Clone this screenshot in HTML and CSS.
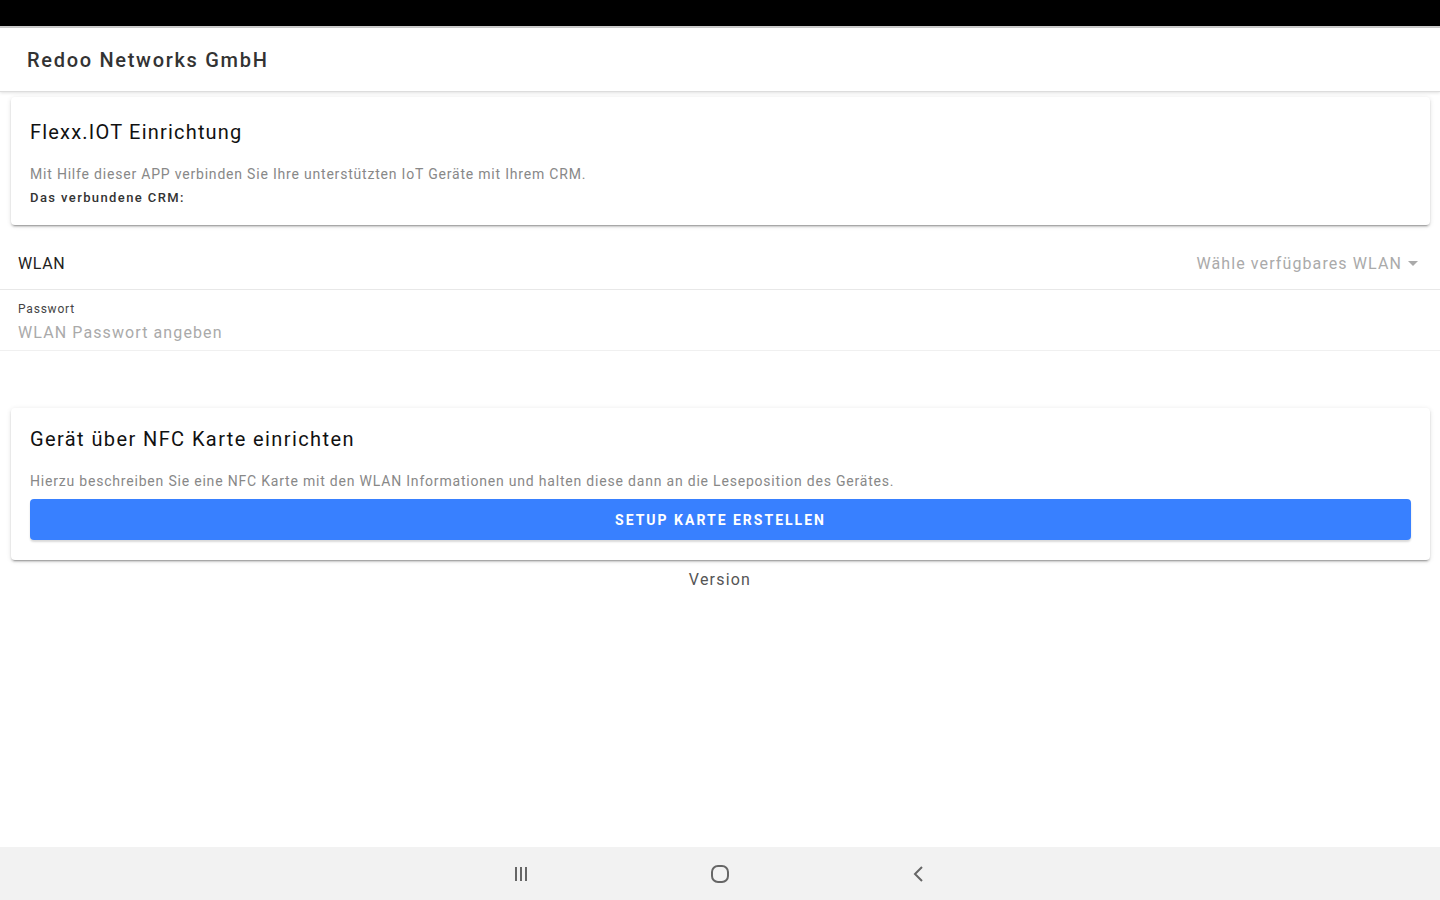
FILE: index.html
```html
<!DOCTYPE html>
<html lang="de">
  <head>
    <meta charset="UTF-8" />
    <meta name="viewport" content="width=device-width, initial-scale=1.0" />
    <title>Flexx.IOT</title>
    <link rel="stylesheet" href="styles.css">
  </head>
  <body>
    <div class="statusBar"></div>

    <div class="app">
      <!-- Toolbar -->
      <header class="toolbar">
        <div class="toolbarTitle">Redoo Networks GmbH</div>
      </header>

      <main class="content">
        <div class="card">
          <h2 class="cardTitle">Flexx.IOT Einrichtung</h2>
          <p class="cardText">Mit Hilfe dieser APP verbinden Sie Ihre unterstützten IoT Geräte mit Ihrem CRM.</p>
          <p class="cardText strong">Das verbundene CRM:</p>
        </div>

        <!-- WLAN settings -->
        <div class="item">
          <span class="itemLabel">WLAN</span>
          <span class="select">Wähle verfügbares WLAN <span class="selectArrow"></span></span>
        </div>
        <div class="item stacked">
          <span class="stackedLabel">Passwort</span>
          <span class="placeholder">WLAN Passwort angeben</span>
        </div>

        <div class="card nfcCard">
          <h2 class="cardTitle">Gerät über NFC Karte einrichten</h2>
          <p class="cardText">Hierzu beschreiben Sie eine NFC Karte mit den WLAN Informationen und halten diese dann an die Leseposition des Gerätes.</p>
          <button class="primaryButton">Setup Karte erstellen</button>
        </div>

        <div class="version">Version</div>
      </main>
    </div>

    <!-- Android navigation -->
    <nav class="navBar">
      <svg width="20" height="18" viewBox="0 0 20 18">
        <path d="M5 2v14M10 2v14M15 2v14" stroke="#666" stroke-width="2" fill="none" />
      </svg>
      <svg width="22" height="22" viewBox="0 0 22 22">
        <rect x="3" y="3" width="16" height="16" rx="6" stroke="#666" stroke-width="2" fill="none" />
      </svg>
      <svg width="20" height="20" viewBox="0 0 20 20">
        <path d="M13 3L6 10l7 7" stroke="#666" stroke-width="2" fill="none" />
      </svg>
    </nav>
  </body>
</html>
```

FILE: styles.css
```css
body {
  margin: 0;
  font-family: Roboto, "Liberation Sans", sans-serif;
  background-color: #fff;
  color: #222;
  width: 1440px;
  height: 900px;
  overflow: hidden;
  display: flex;
  flex-direction: column;
}
.statusBar {
  height: 26px;
  background-color: #000;
  border-bottom: 2px solid #ccc;
}
.app {
  flex: 1;
  display: flex;
  flex-direction: column;
}
.toolbar {
  height: 63px;
  display: flex;
  align-items: center;
  padding-left: 27px;
  border-bottom: 1px solid #ddd;
  box-shadow: 0 1px 3px rgba(0, 0, 0, 0.12);
}
.toolbarTitle {
  font-size: 20px;
  font-weight: 500;
  color: #333;
  letter-spacing: 1.7px;
}
.content {
  flex: 1;
}
.card {
  margin: 5px 10px 0 11px;
  padding: 22px 19px 16px;
  border-radius: 4px;
  background-color: #fff;
  box-shadow: 0 3px 1px -2px rgba(0, 0, 0, 0.2), 0 2px 2px 0 rgba(0, 0, 0, 0.14), 0 1px 5px 0 rgba(0, 0, 0, 0.12);
}
.cardTitle {
  margin: 0 0 18px;
  font-size: 20px;
  font-weight: 400;
  color: #111;
  line-height: 26px;
  letter-spacing: 1.2px;
}
.cardText {
  margin: 0;
  font-size: 14px;
  line-height: 23px;
  color: #888;
  letter-spacing: 0.8px;
}
.cardText.strong {
  color: #333;
  font-size: 13px;
  font-weight: 500;
  letter-spacing: 1.4px;
}
.item {
  margin-top: 13px;
  height: 51px;
  padding: 0 22px 0 18px;
  display: flex;
  align-items: center;
  justify-content: space-between;
  border-bottom: 1px solid #e8e8e8;
}
.itemLabel {
  font-size: 16px;
  color: #222;
  letter-spacing: 0.6px;
}
.select {
  font-size: 16px;
  color: #aaa;
  display: flex;
  align-items: center;
  letter-spacing: 1.1px;
}
.selectArrow {
  margin-left: 6px;
  border-left: 5px solid transparent;
  border-right: 5px solid transparent;
  border-top: 5px solid #aaa;
}
.item.stacked {
  margin-top: 0;
  height: 61px;
  padding-top: 3px;
  box-sizing: border-box;
  flex-direction: column;
  align-items: flex-start;
  justify-content: center;
  gap: 7px;
  border-bottom-color: #f0f0f0;
}
.stackedLabel {
  font-size: 12px;
  line-height: 14px;
  color: #444;
  letter-spacing: 0.8px;
}
.placeholder {
  font-size: 16px;
  line-height: 19px;
  color: #aaa;
  letter-spacing: 1.1px;
}
.nfcCard {
  margin-top: 57px;
  padding-top: 18px;
  padding-bottom: 20px;
}
.nfcCard .cardTitle {
  margin-bottom: 18px;
  letter-spacing: 1.4px;
}
.nfcCard .cardText {
  margin-bottom: 6px;
  letter-spacing: 0.8px;
}
.primaryButton {
  display: block;
  width: 100%;
  height: 41px;
  border: none;
  border-radius: 4px;
  background-color: #3880ff;
  color: #fff;
  font-family: Roboto, "Liberation Sans", sans-serif;
  font-size: 14px;
  font-weight: 700;
  letter-spacing: 2px;
  text-transform: uppercase;
  cursor: pointer;
  box-shadow: 0 2px 2px rgba(0, 0, 0, 0.15);
}
.version {
  margin-top: 10px;
  text-align: center;
  font-size: 16px;
  color: #555;
  letter-spacing: 1.2px;
}
.navBar {
  height: 53px;
  background-color: #f2f2f2;
  display: flex;
  align-items: center;
  justify-content: center;
  gap: 178px;
}
```
